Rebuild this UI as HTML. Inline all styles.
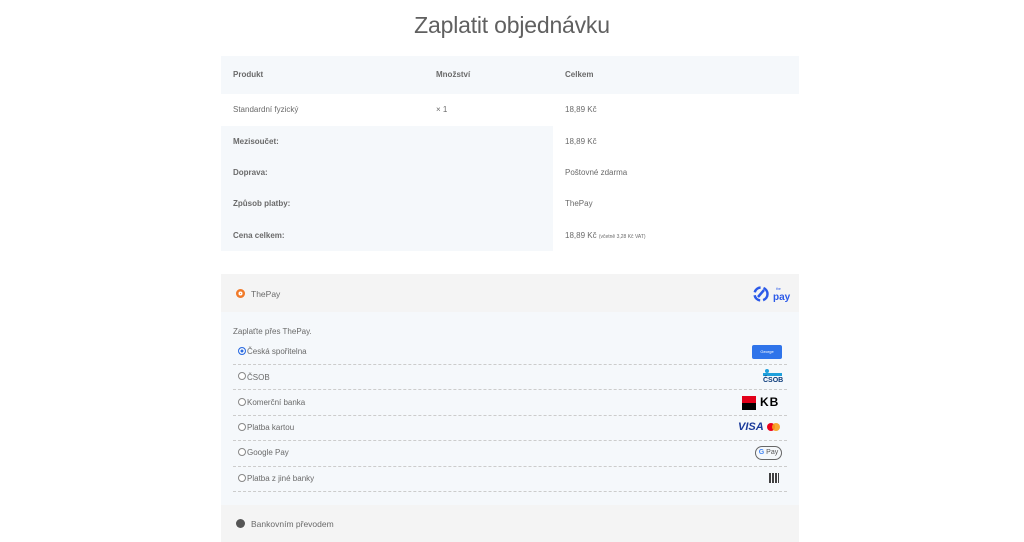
<!DOCTYPE html>
<html><head><meta charset="utf-8"><style>
*{margin:0;padding:0;box-sizing:border-box}
body{width:1024px;height:542px;overflow:hidden;background:#fff;font-family:"Liberation Sans",sans-serif;color:#555;font-size:8px}
h1{position:absolute;top:12px;left:0;width:1024px;text-align:center;font-weight:normal;font-size:23px;color:#606060;letter-spacing:-0.2px}
.abs{position:absolute}
.b{font-weight:bold;color:#666}
.row{position:absolute;left:221px;width:578px}
.lc{position:absolute;left:221px;width:332px;background:#f5f8fb}
.t{position:absolute;font-size:8px;color:#6a6a6a}
.pl{position:absolute;left:233px;width:554px;border-bottom:1px dashed #ccc}
.r{position:absolute;left:238px;width:8px;height:8px;border:1px solid #888;border-radius:50%;background:#fff}
</style></head><body>
<h1>Zaplatit objednávku</h1>
<div class="row" style="top:56px;height:38px;background:#f5f8fb"></div>
<div class="lc" style="top:126px;height:125px"></div>
<div class="t b" style="left:233px;top:70px">Produkt</div>
<div class="t b" style="left:436px;top:70px">Množství</div>
<div class="t b" style="left:565px;top:70px">Celkem</div>
<div class="t" style="left:233px;top:105px">Standardní fyzický</div>
<div class="t" style="left:436px;top:105px">× 1</div>
<div class="t" style="left:565px;top:105px">18,89 Kč</div>
<div class="t b" style="left:233px;top:137px">Mezisoučet:</div>
<div class="t" style="left:565px;top:137px">18,89 Kč</div>
<div class="t b" style="left:233px;top:168px">Doprava:</div>
<div class="t" style="left:565px;top:168px">Poštovné zdarma</div>
<div class="t b" style="left:233px;top:199px">Způsob platby:</div>
<div class="t" style="left:565px;top:199px">ThePay</div>
<div class="t b" style="left:233px;top:231px">Cena celkem:</div>
<div class="t" style="left:565px;top:231px">18,89 Kč <span style="font-size:5px">(včetně 3,28 Kč VAT)</span></div>

<div class="row" style="top:274px;height:38px;background:#f4f4f4"></div>
<div class="row" style="top:312px;height:193px;background:#f5f8fb"></div>
<div class="row" style="top:505px;height:37px;background:#f4f4f4"></div>
<div class="abs" style="left:236px;top:289px;width:9px;height:9px;border-radius:50%;background:#f07a2a;box-shadow:inset 0 0 0 2.5px #f07a2a,inset 0 0 0 4px #fff"></div>
<div class="t" style="left:251px;top:289px;font-size:8.5px">ThePay</div>
<svg class="abs" style="left:752px;top:285px" width="50" height="18" viewBox="0 0 50 18"><circle cx="9" cy="9" r="6.5" fill="none" stroke="#2b59e8" stroke-width="2.5" stroke-dasharray="8 3"/><path d="M6 12 L12 5" stroke="#2b59e8" stroke-width="2.5"/><text x="21" y="15" font-size="10" fill="#2b59e8" font-family="Liberation Sans" font-weight="bold">pay</text><text x="24" y="5" font-size="3.5" fill="#2b59e8" font-family="Liberation Sans">the</text></svg>
<div class="t" style="left:233px;top:327px">Zaplaťte přes ThePay.</div>
<div class="r" style="top:347px;border-color:#2b6be0;box-shadow:inset 0 0 0 1.5px #fff;background:#2b6be0"></div>
<div class="t" style="left:247px;top:347px">Česká spořitelna</div>
<div class="pl" style="top:364px"></div>
<div class="r" style="top:372px"></div><div class="t" style="left:247px;top:373px">ČSOB</div>
<div class="pl" style="top:389px"></div>
<div class="r" style="top:398px"></div><div class="t" style="left:247px;top:398px">Komerční banka</div>
<div class="pl" style="top:415px"></div>
<div class="r" style="top:423px"></div><div class="t" style="left:247px;top:423px">Platba kartou</div>
<div class="pl" style="top:440px"></div>
<div class="r" style="top:448px"></div><div class="t" style="left:247px;top:448px">Google Pay</div>
<div class="pl" style="top:466px"></div>
<div class="r" style="top:474px"></div><div class="t" style="left:247px;top:474px">Platba z jiné banky</div>
<div class="pl" style="top:491px"></div>
<div class="abs" style="left:752px;top:345px;width:30px;height:14px;background:#2f74ea;border-radius:2px;color:#fff;font-size:4px;text-align:center;line-height:14px">George</div>
<div class="abs" style="left:765px;top:369px;width:4px;height:4px;border-radius:50%;background:#1ea0dc"></div>
<div class="abs" style="left:763px;top:373px;width:19px;height:3px;background:#1ea0dc"></div>
<div class="abs" style="left:763px;top:377px;font-size:7px;font-weight:bold;color:#0a3a7a">ČSOB</div>
<div class="abs" style="left:742px;top:396px;width:14px;height:14px;background:#000"><div style="height:7px;background:#e2001a"></div></div>
<div class="abs" style="left:760px;top:395px;font-size:12px;font-weight:bold;color:#000;letter-spacing:1px">KB</div>
<div class="abs" style="left:738px;top:421px;font-size:11px;font-weight:bold;font-style:italic;color:#1a3a9a">VISA</div>
<div class="abs" style="left:767px;top:423px;width:8px;height:8px;border-radius:50%;background:#eb001b"></div>
<div class="abs" style="left:772px;top:423px;width:8px;height:8px;border-radius:50%;background:#f79e1b;opacity:.9"></div>
<div class="abs" style="left:755px;top:446px;width:27px;height:14px;border:1px solid #666;border-radius:7px;font-size:7px;line-height:12px;text-align:center;color:#555"><b style="color:#4285f4">G</b> Pay</div>
<div class="abs" style="left:769px;top:473px;width:10px;height:10px;background:repeating-linear-gradient(90deg,#222 0 2px,#fff 2px 3px),#222;opacity:.85"></div>
<div class="abs" style="left:236px;top:519px;width:9px;height:9px;border-radius:50%;background:#555"></div>
<div class="t" style="left:251px;top:519px;font-size:8.5px">Bankovním převodem</div>
</body></html>
